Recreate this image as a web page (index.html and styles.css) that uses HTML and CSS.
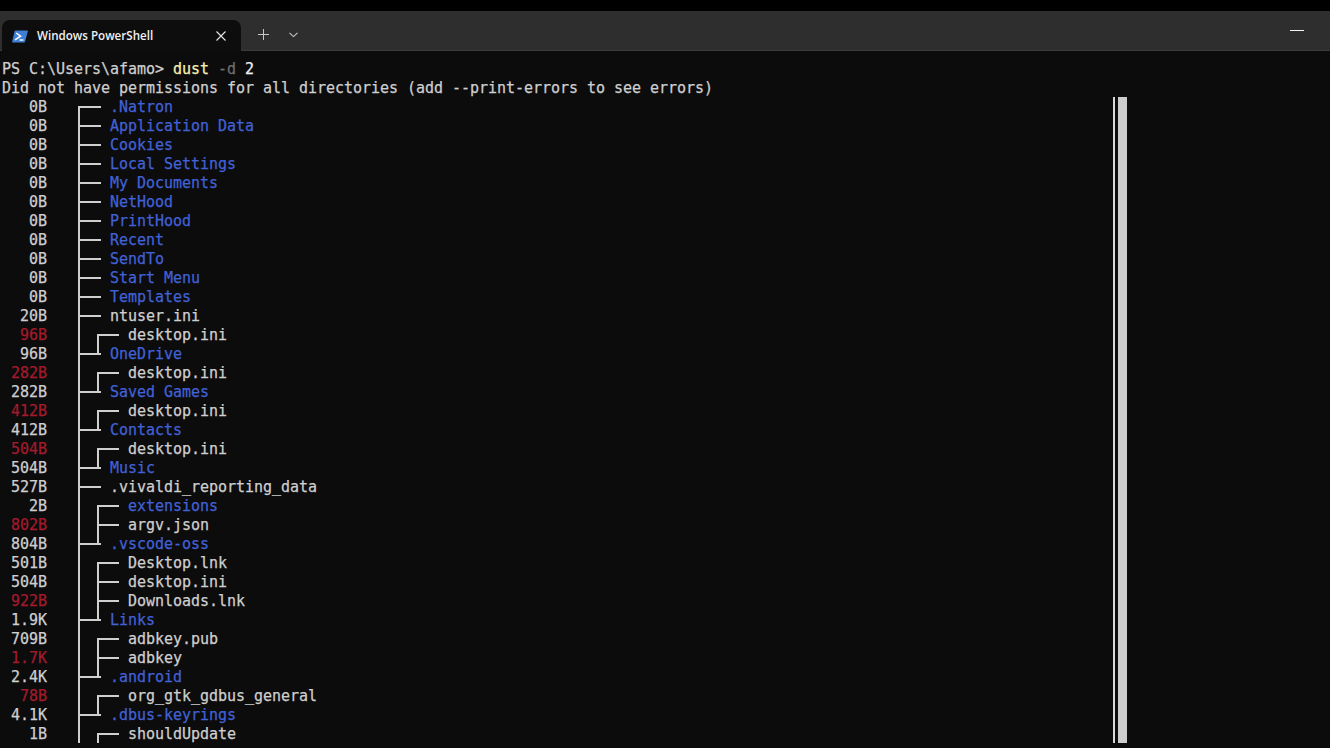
FILE: index.html
```html
<!DOCTYPE html>
<html lang="en">
<head>
<meta charset="utf-8">
<title>Windows PowerShell</title>
<link rel="stylesheet" href="styles.css">
</head>
<body>
<div class="topbar"></div>
<header class="titlebar">
  <div class="tab">
    <svg class="ps-icon" width="16" height="13" viewBox="0 0 16 13"><path d="M3.4 0.5H15.2C15.8 0.5 16 1 15.8 1.5L13 11.8C12.9 12.2 12.5 12.5 12 12.5H0.8C0.2 12.5 0 12 0.2 11.5L2.6 1.2C2.7 0.8 3 0.5 3.4 0.5Z" fill="#3f7fd6"/><path d="M4.2 3L8.6 6.2L3 9.8" fill="none" stroke="#fff" stroke-width="1.5"/><path d="M7.6 10H11.4" fill="none" stroke="#fff" stroke-width="1.4"/></svg>
    <span class="tab-title">Windows PowerShell</span>
    <svg class="tab-close" width="10" height="10" viewBox="0 0 10 10"><path d="M0.5 0.5L9.5 9.5M9.5 0.5L0.5 9.5" stroke="#e8e8e8" stroke-width="1.1" fill="none"/></svg>
  </div>
  <svg class="new-tab" width="11" height="11" viewBox="0 0 11 11"><path d="M5.5 0V11M0 5.5H11" stroke="#c8c8c8" stroke-width="1" fill="none"/></svg>
  <svg class="tab-menu" width="9" height="6" viewBox="0 0 9 6"><path d="M0.5 0.8L4.5 4.6L8.5 0.8" stroke="#c8c8c8" stroke-width="1.1" fill="none"/></svg>
  <div class="minimize"></div>
</header>
<main class="terminal">
  <div class="lines">
    <div class="row"><span class="txt">PS C:\Users\afamo&gt; </span><span class="cmd">dust</span><span class="txt"> </span><span class="flag">-d</span><span class="txt"> </span><span class="arg">2</span></div>
    <div class="row"><span class="txt">Did not have permissions for all directories (add --print-errors to see errors)</span></div>
    <div class="row"><span class="size">0B</span><span class="tree first"></span><span class="dir">.Natron</span></div>
    <div class="row"><span class="size">0B</span><span class="tree mid"></span><span class="dir">Application Data</span></div>
    <div class="row"><span class="size">0B</span><span class="tree mid"></span><span class="dir">Cookies</span></div>
    <div class="row"><span class="size">0B</span><span class="tree mid"></span><span class="dir">Local Settings</span></div>
    <div class="row"><span class="size">0B</span><span class="tree mid"></span><span class="dir">My Documents</span></div>
    <div class="row"><span class="size">0B</span><span class="tree mid"></span><span class="dir">NetHood</span></div>
    <div class="row"><span class="size">0B</span><span class="tree mid"></span><span class="dir">PrintHood</span></div>
    <div class="row"><span class="size">0B</span><span class="tree mid"></span><span class="dir">Recent</span></div>
    <div class="row"><span class="size">0B</span><span class="tree mid"></span><span class="dir">SendTo</span></div>
    <div class="row"><span class="size">0B</span><span class="tree mid"></span><span class="dir">Start Menu</span></div>
    <div class="row"><span class="size">0B</span><span class="tree mid"></span><span class="dir">Templates</span></div>
    <div class="row"><span class="size">20B</span><span class="tree mid"></span><span class="txt">ntuser.ini</span></div>
    <div class="row"><span class="size red">96B</span><span class="tree sub-top"></span><span class="txt">desktop.ini</span></div>
    <div class="row"><span class="size">96B</span><span class="tree up"></span><span class="dir">OneDrive</span></div>
    <div class="row"><span class="size red">282B</span><span class="tree sub-top"></span><span class="txt">desktop.ini</span></div>
    <div class="row"><span class="size">282B</span><span class="tree up"></span><span class="dir">Saved Games</span></div>
    <div class="row"><span class="size red">412B</span><span class="tree sub-top"></span><span class="txt">desktop.ini</span></div>
    <div class="row"><span class="size">412B</span><span class="tree up"></span><span class="dir">Contacts</span></div>
    <div class="row"><span class="size red">504B</span><span class="tree sub-top"></span><span class="txt">desktop.ini</span></div>
    <div class="row"><span class="size">504B</span><span class="tree up"></span><span class="dir">Music</span></div>
    <div class="row"><span class="size">527B</span><span class="tree mid"></span><span class="txt">.vivaldi_reporting_data</span></div>
    <div class="row"><span class="size">2B</span><span class="tree sub-top"></span><span class="dir">extensions</span></div>
    <div class="row"><span class="size red">802B</span><span class="tree sub-mid"></span><span class="txt">argv.json</span></div>
    <div class="row"><span class="size">804B</span><span class="tree up"></span><span class="dir">.vscode-oss</span></div>
    <div class="row"><span class="size">501B</span><span class="tree sub-top"></span><span class="txt">Desktop.lnk</span></div>
    <div class="row"><span class="size">504B</span><span class="tree sub-mid"></span><span class="txt">desktop.ini</span></div>
    <div class="row"><span class="size red">922B</span><span class="tree sub-mid"></span><span class="txt">Downloads.lnk</span></div>
    <div class="row"><span class="size">1.9K</span><span class="tree up"></span><span class="dir">Links</span></div>
    <div class="row"><span class="size">709B</span><span class="tree sub-top"></span><span class="txt">adbkey.pub</span></div>
    <div class="row"><span class="size red">1.7K</span><span class="tree sub-mid"></span><span class="txt">adbkey</span></div>
    <div class="row"><span class="size">2.4K</span><span class="tree up"></span><span class="dir">.android</span></div>
    <div class="row"><span class="size red">78B</span><span class="tree sub-top"></span><span class="txt">org_gtk_gdbus_general</span></div>
    <div class="row"><span class="size">4.1K</span><span class="tree up"></span><span class="dir">.dbus-keyrings</span></div>
    <div class="row"><span class="size">1B</span><span class="tree sub-top"></span><span class="txt">shouldUpdate</span></div>
  </div>
  <div class="bar-thin"></div>
  <div class="bar-thick"></div>
</main>
</body>
</html>
```
FILE: styles.css
```css
* { box-sizing: border-box; }
html, body { margin: 0; height: 748px; overflow: hidden; background: #0c0c0c; }
.topbar { height: 11px; background: #000; }
.titlebar {
  height: 40px;
  display: flex;
  align-items: flex-end;
  padding-left: 2px;
  background: #2e2e2e;
  border-bottom: 1px solid #3a3a3a;
}
.tab {
  width: 239px;
  height: 31px;
  margin-bottom: -1px;
  display: flex;
  align-items: center;
  padding: 0 15px 0 10px;
  background: #0d0d0d;
  border-radius: 8px 8px 0 0;
}
.ps-icon { flex: none; margin-top: 1px; }
.tab-title {
  margin-left: 9px;
  flex: 1;
  font: 600 11.6px/16px "Open Sans", sans-serif;
  color: #f0f0f0;
  white-space: nowrap;
}
.tab-close { flex: none; margin-top: 1px; }
.new-tab { flex: none; margin: 0 0 10px 17px; }
.tab-menu { flex: none; margin: 0 0 12px 20px; }
.minimize {
  width: 14px;
  height: 1px;
  margin: 0 26px 19px auto;
  background: #f4f4f4;
}
.terminal {
  height: 692px;
  display: flex;
  overflow: hidden;
  background: #0c0c0c;
}
.lines {
  width: 1113px;
  flex: none;
  padding: 8px 0 0 2px;
  font: 15px/21px "DejaVu Sans Mono", monospace;
  letter-spacing: -0.03px;
  -webkit-text-stroke: 0.25px;
  color: #cfcfcf;
}
.row { height: 19px; display: flex; white-space: pre; }
.txt { color: #cfcfcf; }
.cmd { color: #f5efb0; }
.flag { color: #6f6f6f; }
.arg { color: #f2f2f2; }
.dir { color: #4161d6; }
.size { width: 45px; text-align: right; color: #cfcfcf; }
.size.red { color: #a31b2d; }
.tree {
  --line: linear-gradient(#cfcfcf, #cfcfcf);
  flex: none;
  width: 63px;
  background-repeat: no-repeat;
}
.first {
  background-image: var(--line), var(--line);
  background-size: 2px 10px, 21px 2px;
  background-position: 31px 9px, 33px 9px;
}
.mid {
  background-image: var(--line), var(--line);
  background-size: 2px 19px, 21px 2px;
  background-position: 31px 0, 33px 9px;
}
.up {
  background-image: var(--line), var(--line), var(--line);
  background-size: 2px 19px, 21px 2px, 2px 11px;
  background-position: 31px 0, 33px 9px, 50px 0;
}
.sub-top {
  width: 81px;
  background-image: var(--line), var(--line), var(--line);
  background-size: 2px 19px, 2px 10px, 22px 2px;
  background-position: 31px 0, 50px 9px, 50px 9px;
}
.sub-mid {
  width: 81px;
  background-image: var(--line), var(--line), var(--line);
  background-size: 2px 19px, 2px 19px, 22px 2px;
  background-position: 31px 0, 50px 0, 50px 9px;
}
.bar-thin { flex: none; width: 2px; margin-top: 46px; background: #d8d8d8; }
.bar-thick { flex: none; width: 9px; margin: 46px 0 0 3px; background: #cdcdcd; }
```
